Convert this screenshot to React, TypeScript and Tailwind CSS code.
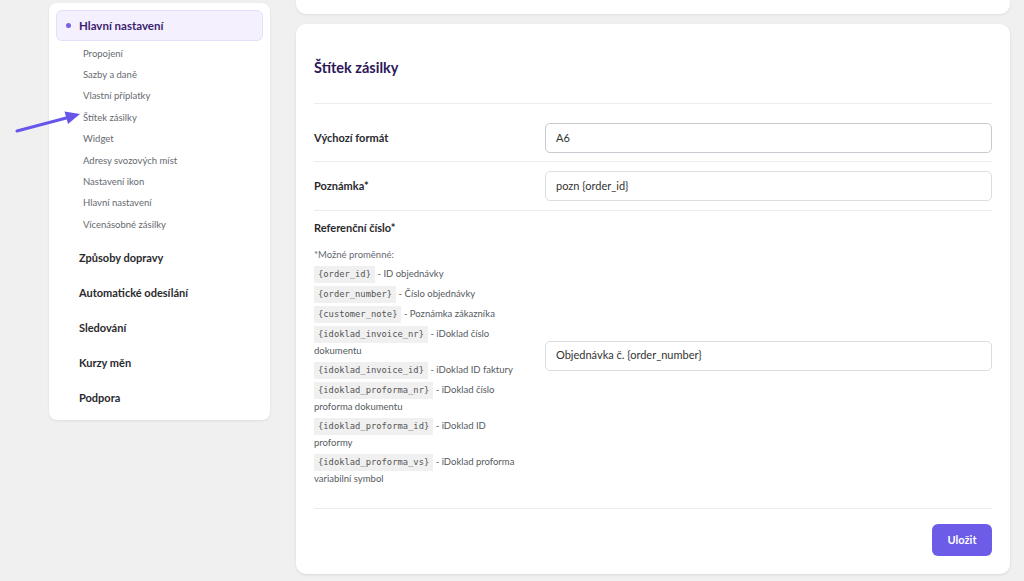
import React from "react";

const subItems = [
  "Propojení",
  "Sazby a daně",
  "Vlastní příplatky",
  "Štítek zásilky",
  "Widget",
  "Adresy svozových míst",
  "Nastavení ikon",
  "Hlavní nastavení",
  "Vícenásobné zásilky",
];

const mainItems = ["Způsoby dopravy", "Automatické odesílání", "Sledování", "Kurzy měn", "Podpora"];

const vars: [string, string][] = [
  ["{order_id}", "ID objednávky"],
  ["{order_number}", "Číslo objednávky"],
  ["{customer_note}", "Poznámka zákazníka"],
  ["{idoklad_invoice_nr}", "iDoklad číslo dokumentu"],
  ["{idoklad_invoice_id}", "iDoklad ID faktury"],
  ["{idoklad_proforma_nr}", "iDoklad číslo proforma dokumentu"],
  ["{idoklad_proforma_id}", "iDoklad ID proformy"],
  ["{idoklad_proforma_vs}", "iDoklad proforma variabilní symbol"],
];

export default function App() {
  return (
    <div
      className="relative w-[1024px] h-[581px] overflow-hidden bg-[#f0f0f1] flex"
      style={{ fontFamily: 'Lato, "Noto Sans", sans-serif' }}
    >
      {/* Sidebar */}
      <div className="ml-[49px] mt-[3px] w-[221px] h-[417px] bg-white rounded-[8px] shadow-[0_1px_3px_rgba(0,0,0,0.08)] flex flex-col">
        <div className="mx-[7px] mt-[7px] h-[31px] rounded-[6px] bg-[#f4f0fe] border border-[#e6ddfb] flex items-center pl-[9px]">
          <span className="w-[5px] h-[5px] rounded-full bg-[#7b61e6]" />
          <span className="ml-[8px] text-[11.5px] font-bold text-[#3b1e6e]">Hlavní nastavení</span>
        </div>
        <div className="mt-[2px] flex flex-col">
          {subItems.map((s) => (
            <div key={s} className="h-[21.4px] flex items-center pl-[34px] text-[9.5px] text-[#666a70]">
              {s}
            </div>
          ))}
        </div>
        <div className="mt-[5px] flex flex-col">
          {mainItems.map((s) => (
            <div key={s} className="h-[35px] flex items-center pl-[30px] text-[11px] font-bold text-[#2a2a2e]">
              {s}
            </div>
          ))}
        </div>
      </div>

      {/* Main column */}
      <div className="ml-[26px] w-[714px] flex flex-col">
        <div className="h-[14px] bg-white rounded-b-[10px] shadow-[0_1px_3px_rgba(0,0,0,0.08)]" />
        <div className="mt-[10px] h-[550px] bg-white rounded-[10px] shadow-[0_1px_3px_rgba(0,0,0,0.1)] px-[18px] flex flex-col">
          <div className="pt-[34px] pb-[25px] border-b border-[#ececee]">
            <h2 className="text-[14.5px] leading-[20px] font-bold text-[#2d1659]">Štítek zásilky</h2>
          </div>

          <div className="grid grid-cols-[231px_1fr] items-center pt-[19px] pb-[8px] border-b border-[#ececee]">
            <div className="text-[11px] font-bold text-[#2a2a2e]">Výchozí formát</div>
            <div className="h-[30px] rounded-[5px] border border-[#c9c9d1] flex items-center px-[10px] text-[11px] text-[#333]">
              A6
            </div>
          </div>

          <div className="grid grid-cols-[231px_1fr] items-center py-[9px] border-b border-[#ececee]">
            <div className="text-[11px] font-bold text-[#2a2a2e]">Poznámka*</div>
            <div className="h-[30px] rounded-[5px] border border-[#dcdce3] flex items-center px-[10px] text-[11px] text-[#333]">
              pozn {"{order_id}"}
            </div>
          </div>

          <div className="grid grid-cols-[231px_1fr] items-center pt-[9px] pb-[21px] border-b border-[#ececee]">
            <div className="pr-[22px]">
              <div className="text-[11px] leading-[16px] font-bold text-[#2a2a2e]">Referenční číslo*</div>
              <div className="mt-[10px] text-[9.5px] leading-[17px] text-[#666a70]">*Možné proměnné:</div>
              <div className="mt-[3px] flex flex-col gap-[3px]">
                {vars.map(([c, d]) => (
                  <div key={c} className="text-[9.5px] leading-[16px] text-[#555a60]">
                    <code
                      className="inline-block bg-[#f0f0f1] px-[4px] py-[2px] text-[8.8px] leading-[13px] text-[#555]"
                      style={{ fontFamily: '"DejaVu Sans Mono", "Liberation Mono", monospace' }}
                    >
                      {c}
                    </code>{" "}
                    - {d}
                  </div>
                ))}
              </div>
            </div>
            <div className="h-[30px] mt-[4px] rounded-[5px] border border-[#dcdce3] flex items-center px-[10px] text-[11px] text-[#333]">
              Objednávka č. {"{order_number}"}
            </div>
          </div>

          <div className="flex justify-end pt-[15px]">
            <button className="h-[32px] w-[60px] rounded-[6px] bg-[#6c5ce7] text-white text-[11px] font-bold">
              Uložit
            </button>
          </div>
        </div>
      </div>

      {/* Arrow annotation */}
      <svg className="absolute left-0 top-0" width="100" height="150" viewBox="0 0 100 150">
        <line x1="17" y1="131" x2="70" y2="117" stroke="#6657ea" strokeWidth="3" strokeLinecap="round" />
        <polygon points="80,114 68,124 64.5,111.5" fill="#6657ea" />
      </svg>
    </div>
  );
}
